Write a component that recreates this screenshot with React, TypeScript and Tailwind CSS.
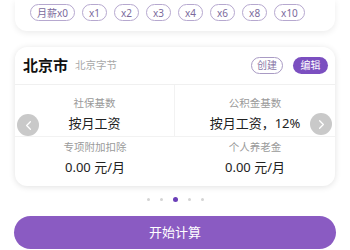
import { ChevronLeft, ChevronRight } from "lucide-react";

const multiples = ["月薪x0", "x1", "x2", "x3", "x4", "x6", "x8", "x10"];

const cells = [
  { label: "社保基数", value: "按月工资" },
  { label: "公积金基数", value: "按月工资，12%" },
  { label: "专项附加扣除", value: "0.00 元/月" },
  { label: "个人养老金", value: "0.00 元/月" },
];

export default function App() {
  return (
    <div
      className="w-[350px] h-[250px] overflow-hidden bg-white"
      style={{ fontFamily: '"Noto Sans", "Noto Sans CJK SC", sans-serif' }}
    >
      <div className="mx-[15px] h-[31px] rounded-b-xl bg-white shadow-[0_2px_6px_rgba(0,0,0,0.08)] pl-[15px] pt-[4px] flex gap-[7px]">
        {multiples.map((m) => (
          <span
            key={m}
            className="h-[17px] px-[6px] rounded-full border border-[#b6a8cf] text-[#7b6a9c] text-[10px] leading-[14px] flex items-center"
          >
            {m}
          </span>
        ))}
      </div>

      <div className="relative mx-[15px] mt-[16px] h-[139px] rounded-xl bg-white shadow-[0_1px_6px_rgba(0,0,0,0.12)]">
        <div className="h-[38px] flex items-center pl-[8px] pr-[7px] border-b border-[#f0f0f0]">
          <span className="text-[15px] font-bold text-[#111] leading-none">北京市</span>
          <span className="ml-[7px] text-[10.5px] text-[#a8a8a8] leading-none">北京字节</span>
          <div className="ml-auto flex gap-[10px]">
            <span className="h-[17px] w-[32px] rounded-full border border-[#a99bc4] text-[#8a7aa8] text-[10px] flex items-center justify-center">
              创建
            </span>
            <span className="h-[17px] w-[35px] rounded-full bg-[#7b4fc0] text-white text-[10px] flex items-center justify-center">
              编辑
            </span>
          </div>
        </div>
        <div className="grid grid-cols-2">
          {cells.map((c, i) => (
            <div
              key={c.label}
              className={
                i < 2
                  ? "h-[52px] pt-[10px] flex flex-col items-center border-b border-[#f2f2f2] " +
                    (i === 0 ? "border-r" : "")
                  : "h-[49px] pt-[2px] flex flex-col items-center"
              }
            >
              <span className="text-[10.5px] leading-[16px] text-[#9a9a9a]">{c.label}</span>
              <span className="mt-[2px] text-[13px] leading-[20px] text-[#222]">{c.value}</span>
            </div>
          ))}
        </div>
        <div className="absolute left-[2px] top-[67px] w-[22px] h-[22px] rounded-full bg-[#c9c9c9] flex items-center justify-center text-white">
          <ChevronLeft size={15} strokeWidth={2} />
        </div>
        <div className="absolute right-[3px] top-[66px] w-[22px] h-[22px] rounded-full bg-[#c9c9c9] flex items-center justify-center text-white">
          <ChevronRight size={15} strokeWidth={2} />
        </div>
      </div>

      <div className="h-[26px] flex items-center justify-center gap-[10px]">
        <span className="w-[3px] h-[3px] rounded-full bg-[#d4d4d4]" />
        <span className="w-[3px] h-[3px] rounded-full bg-[#d4d4d4]" />
        <span className="w-[5px] h-[5px] rounded-full bg-[#6b3fb8]" />
        <span className="w-[3px] h-[3px] rounded-full bg-[#d4d4d4]" />
        <span className="w-[3px] h-[3px] rounded-full bg-[#d4d4d4]" />
      </div>

      <div className="mx-[14px] mt-[4px] h-[33px] rounded-full bg-[#8a5bc2] flex items-center justify-center text-white text-[13px]">
        开始计算
      </div>
    </div>
  );
}
